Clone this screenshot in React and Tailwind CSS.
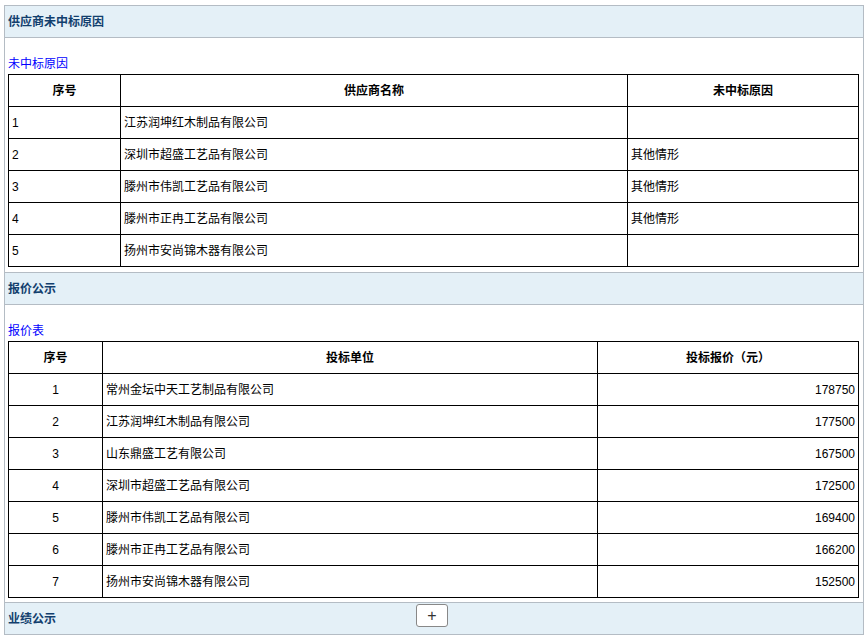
import React from "react";

const font = { fontFamily: '"Liberation Sans", "Noto Sans CJK SC", sans-serif' };

function SectionHeader({ title, children }) {
  return (
    <div className="relative h-[33px] bg-[#e4f0f7] border border-[#b4bcc4] flex items-center px-[3px]">
      <span className="text-[12px] font-bold text-[#123f6e]">{title}</span>
      {children}
    </div>
  );
}

const losers = [
  ["1", "江苏润坤红木制品有限公司", ""],
  ["2", "深圳市超盛工艺品有限公司", "其他情形"],
  ["3", "滕州市伟凯工艺品有限公司", "其他情形"],
  ["4", "滕州市正冉工艺品有限公司", "其他情形"],
  ["5", "扬州市安尚锦木器有限公司", ""],
];

const bids = [
  ["1", "常州金坛中天工艺制品有限公司", "178750"],
  ["2", "江苏润坤红木制品有限公司", "177500"],
  ["3", "山东鼎盛工艺有限公司", "167500"],
  ["4", "深圳市超盛工艺品有限公司", "172500"],
  ["5", "滕州市伟凯工艺品有限公司", "169400"],
  ["6", "滕州市正冉工艺品有限公司", "166200"],
  ["7", "扬州市安尚锦木器有限公司", "152500"],
];

const th = "border border-black h-[32px] text-[12px] font-bold text-center";
const td = "border border-black h-[32px] text-[12px] px-[3px]";

export default function App() {
  return (
    <div className="bg-white w-[868px] h-[636px] overflow-hidden pt-[5px] pl-[4px]" style={font}>
      <div className="w-[860px]">
        <SectionHeader title="供应商未中标原因" />
        <div className="border-x border-[#b4bcc4] px-[3px] pb-[5px]">
          <div className="text-[12px] text-[#0000ff] pt-[19px] pb-[2px] leading-[15px]">未中标原因</div>
          <table className="w-[851px] border-collapse">
            <thead>
              <tr>
                <th className={`${th} w-[112px]`}>序号</th>
                <th className={`${th} w-[507px]`}>供应商名称</th>
                <th className={th}>未中标原因</th>
              </tr>
            </thead>
            <tbody>
              {losers.map((r) => (
                <tr key={r[0]}>
                  <td className={`${td} text-[11px]`}>{r[0]}</td>
                  <td className={td}>{r[1]}</td>
                  <td className={td}>{r[2]}</td>
                </tr>
              ))}
            </tbody>
          </table>
        </div>
        <SectionHeader title="报价公示" />
        <div className="border-x border-[#b4bcc4] px-[3px] pb-[4px]">
          <div className="text-[12px] text-[#0000ff] pt-[19px] pb-[2px] leading-[15px]">报价表</div>
          <table className="w-[851px] border-collapse">
            <thead>
              <tr>
                <th className={`${th} w-[94px]`}>序号</th>
                <th className={`${th} w-[495px]`}>投标单位</th>
                <th className={th}>投标报价（元）</th>
              </tr>
            </thead>
            <tbody>
              {bids.map((r) => (
                <tr key={r[0]}>
                  <td className={`${td} text-center text-[11px]`}>{r[0]}</td>
                  <td className={td}>{r[1]}</td>
                  <td className={`${td} text-right text-[11px]`}>{r[2]}</td>
                </tr>
              ))}
            </tbody>
          </table>
        </div>
        <SectionHeader title="业绩公示">
          <button className="absolute left-[411px] top-[1px] w-[32px] h-[23px] bg-white border border-[#888] rounded-[3px] flex items-center justify-center text-[16px] text-[#333] leading-none">
            +
          </button>
        </SectionHeader>
      </div>
    </div>
  );
}
